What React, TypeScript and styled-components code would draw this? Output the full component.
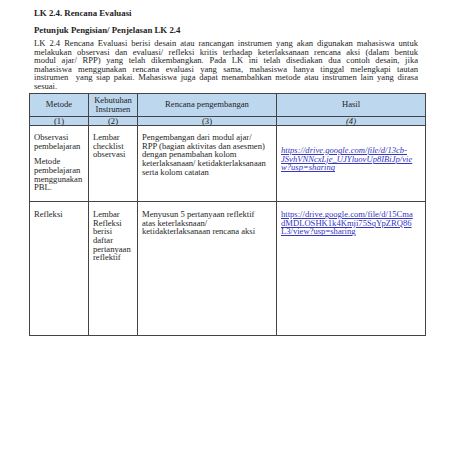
import React from "react";
import styled, { createGlobalStyle } from "styled-components";

const Global = createGlobalStyle`
  html, body { margin: 0; padding: 0; background: #fff; }
  body { font-family: "Liberation Serif", "Times New Roman", serif; color: #1e1e1e; }
`;

const Page = styled.div`
  width: 452px;
  height: 452px;
  box-sizing: border-box;
  padding: 8px 34px 0 34px;
`;

const Title = styled.div`
  font-weight: bold;
  font-size: 8.8px;
  line-height: 10px;
`;

const Subtitle = styled.div`
  font-weight: bold;
  font-size: 8.8px;
  line-height: 10px;
  margin-top: 7px;
`;

const Para = styled.p`
  margin: 4px 0 0 0;
  font-size: 8.6px;
  line-height: 8.6px;
  text-align: justify;
  text-align-last: justify;
`;

const Table = styled.table`
  margin: 2px 0 0 -5px;
  width: 396px;
  border-collapse: collapse;
  table-layout: fixed;
  font-size: 8.6px;
  line-height: 8.6px;
`;

const Th = styled.th<{ $italic?: boolean; $h?: number }>`
  background: #bdd7ee;
  border: 1px solid #444;
  font-weight: normal;
  text-align: center;
  vertical-align: middle;
  padding: 0 2px;
  height: ${(p) => p.$h ?? 8}px;
  font-style: ${(p) => (p.$italic ? "italic" : "normal")};
  white-space: nowrap;
`;

const Td = styled.td<{ $h: number; $pt?: number }>`
  border: 1px solid #444;
  vertical-align: top;
  padding: ${(p) => p.$pt ?? 7}px 4px 0 4px;
  height: ${(p) => p.$h}px;
  box-sizing: border-box;
  white-space: nowrap;
`;

const Gap = styled.div`
  margin-top: 7px;
`;

const Link = styled.a<{ $italic?: boolean }>`
  color: #3535c0;
  text-decoration: underline;
  font-style: ${(p) => (p.$italic ? "italic" : "normal")};
`;

const paraLines = [
  "LK 2.4 Rencana Evaluasi berisi desain atau rancangan instrumen yang akan digunakan mahasiswa untuk",
  "melakukan observasi dan evaluasi/ refleksi kritis terhadap keterlaksanaan rencana aksi (dalam bentuk",
  "modul ajar/ RPP) yang telah dikembangkan.  Pada LK ini telah disediakan dua contoh desain, jika",
  "mahasiswa menggunakan rencana evaluasi yang sama, mahasiswa hanya tinggal melengkapi tautan",
  "instrumen\u00a0 yang siap pakai. Mahasiswa juga dapat menambahkan metode atau instrumen lain yang dirasa",
  "sesuai.",
];

const lines = (arr: string[]) =>
  arr.map((t, i) => (
    <React.Fragment key={i}>
      {i > 0 && <br />}
      {t}
    </React.Fragment>
  ));

export default function App() {
  return (
    <>
      <Global />
      <Page>
        <Title>LK 2.4. Rencana Evaluasi</Title>
        <Subtitle>Petunjuk Pengisian/ Penjelasan LK 2.4</Subtitle>
        <Para>{lines(paraLines)}</Para>
        <Table>
          <colgroup>
            <col style={{ width: 59 }} />
            <col style={{ width: 49 }} />
            <col style={{ width: 139 }} />
            <col style={{ width: 149 }} />
          </colgroup>
          <thead>
            <tr>
              <Th $h={22}>Metode</Th>
              <Th $h={22}>{lines(["Kebutuhan", "Instrumen"])}</Th>
              <Th $h={22}>Rencana pengembangan</Th>
              <Th $h={22}>Hasil</Th>
            </tr>
            <tr>
              <Th>(1)</Th>
              <Th>(2)</Th>
              <Th>(3)</Th>
              <Th $italic>(4)</Th>
            </tr>
          </thead>
          <tbody>
            <tr>
              <Td $h={76}>
                {lines(["Observasi", "pembelajaran"])}
                <Gap>{lines(["Metode", "pembelajaran", "menggunakan", "PBL."])}</Gap>
              </Td>
              <Td $h={76}>{lines(["Lembar", "checklist", "observasi"])}</Td>
              <Td $h={76}>
                {lines([
                  "Pengembangan dari modul ajar/",
                  "RPP (bagian aktivitas dan asesmen)",
                  "dengan penambahan kolom",
                  "keterlaksanaan/ ketidakterlaksanaan",
                  "serta kolom catatan",
                ])}
              </Td>
              <Td $h={76} $pt={20}>
                <Link $italic href="#">
                  {lines([
                    "https://drive.google.com/file/d/13cb-",
                    "JSvhVNNcxLje_UJYluovUp8IBiJp/vie",
                    "w?usp=sharing",
                  ])}
                </Link>
              </Td>
            </tr>
            <tr>
              <Td $h={134} $pt={8}>Refleksi</Td>
              <Td $h={134} $pt={8}>
                {lines(["Lembar", "Refleksi", "berisi", "daftar", "pertanyaan", "reflektif"])}
              </Td>
              <Td $h={134} $pt={8}>
                {lines([
                  "Menyusun 5 pertanyaan reflektif",
                  "atas keterlaksnaan/",
                  "ketidakterlaksanaan rencana aksi",
                ])}
              </Td>
              <Td $h={134} $pt={8}>
                <Link href="#">
                  {lines([
                    "https://drive.google.com/file/d/15Cma",
                    "dMDLOSHK1k4Kmji75SqYpZRQ86",
                    "L3/view?usp=sharing",
                  ])}
                </Link>
              </Td>
            </tr>
          </tbody>
        </Table>
      </Page>
    </>
  );
}
